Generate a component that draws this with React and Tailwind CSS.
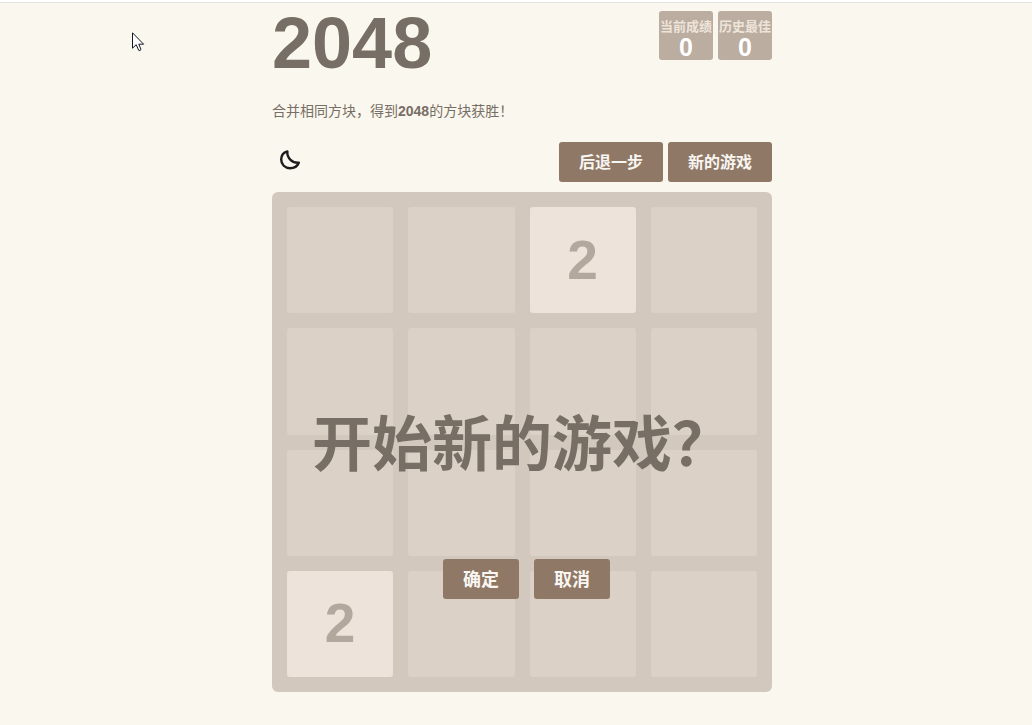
import React, { useState } from "react";

const BOARD = [
  [0, 0, 2, 0],
  [0, 0, 0, 0],
  [0, 0, 0, 0],
  [2, 0, 0, 0],
];

const ScoreBox = ({ label, value }) => (
  <div className="w-[54px] h-[49px] pt-2 rounded-[3px] bg-[#bbada0] text-center font-bold">
    <div className="text-[13px] leading-4 whitespace-nowrap text-[#eee4da]">{label}</div>
    <div className="text-[25px] leading-6 text-white">{value}</div>
  </div>
);

const Button = ({ children, className = "text-base", onClick }) => (
  <button
    type="button"
    onClick={onClick}
    className={`h-10 px-5 pt-0.5 rounded-[3px] bg-[#8f7866] font-bold text-[#f9f6f2] cursor-pointer ${className}`}
  >
    {children}
  </button>
);

const Cell = ({ value }) => (
  <div
    className={`flex items-center justify-center rounded-[3px] text-[55px] leading-none font-bold text-[#b2a89e] ${
      value ? "bg-[#ede3da]" : "bg-[#dbd1c7]"
    }`}
  >
    {value || ""}
  </div>
);

const MoonIcon = () => (
  <svg width="22" height="22" viewBox="0 0 22 22" fill="none" stroke="#1c1c1c" strokeWidth="2.4" strokeLinejoin="round">
    <path d="M8.4 2.4C4.6 3.5 2.2 6.6 2.2 10.5C2.2 15.6 6 19.2 11 19.2C15.3 19.2 18.5 17 19.8 13.7C16.8 13.9 14 13.2 11.5 10.8C9 8.3 8 5.5 8.4 2.4Z" />
  </svg>
);

const Pointer = () => (
  <svg
    className="absolute left-[132px] top-[30px] pointer-events-none"
    width="13"
    height="20"
    viewBox="0 0 13 20"
    fill="#fff"
    stroke="#111827"
    strokeWidth="1"
  >
    <path d="M.5 .8V16.2L4.2 12.7L6.7 18.3Q8 19.2 9 17.5L6.8 12.2H11.6Z" />
  </svg>
);

const App = () => {
  const [asking, setAsking] = useState(true);

  return (
    <div className="relative min-h-screen border-t-2 border-white bg-[#faf7ee] font-['Liberation_Sans','Noto_Sans_CJK_SC',sans-serif] text-[#776e65]">
      <div className="h-px bg-[#e2e2e2]" />
      <Pointer />
      <main className="pl-3 pt-2">
        <div className="mx-auto w-full max-w-[500px]">
          <header className="flex items-start justify-between">
            <h1 className="text-[72px] leading-[64px] font-bold">2048</h1>
            <div className="flex gap-[5px]">
              <ScoreBox label="当前成绩" value={0} />
              <ScoreBox label="历史最佳" value={0} />
            </div>
          </header>

          <p className="mt-[26px] text-sm leading-5">
            合并相同方块，得到<strong>2048</strong>的方块获胜！
          </p>

          <div className="mt-[21px] flex items-start justify-between">
            <button type="button" aria-label="夜间模式" className="mt-[7px] ml-[7px] cursor-pointer">
              <MoonIcon />
            </button>
            <div className="flex gap-[5px]">
              <Button>后退一步</Button>
              <Button onClick={() => setAsking(true)}>新的游戏</Button>
            </div>
          </div>

          <section className="relative mt-[10px] aspect-square rounded-md bg-[#d2c8be] p-[15px]">
            <div className="grid h-full grid-cols-4 grid-rows-4 gap-[15px]">
              {BOARD.flat().map((value, i) => (
                <Cell key={i} value={value} />
              ))}
            </div>
            {asking && (
              <div className="absolute inset-0 flex flex-col items-center pt-[224px]">
                <p className="text-[60px] leading-[60px] font-bold whitespace-nowrap">开始新的游戏？</p>
                <div className="mt-[83px] ml-[9px] flex gap-[15px]">
                  <Button className="text-lg" onClick={() => setAsking(false)}>
                    确定
                  </Button>
                  <Button className="text-lg" onClick={() => setAsking(false)}>
                    取消
                  </Button>
                </div>
              </div>
            )}
          </section>
        </div>
      </main>
    </div>
  );
};

export default App;
